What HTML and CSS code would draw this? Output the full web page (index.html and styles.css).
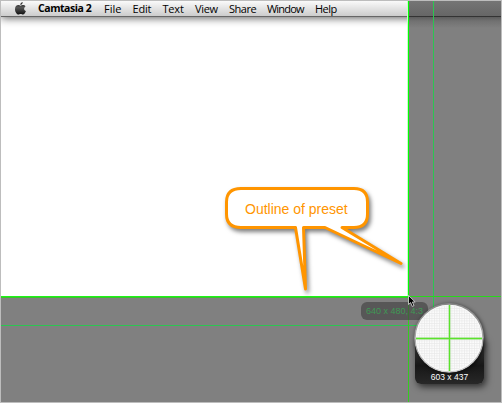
FILE: index.html
```
<!DOCTYPE html>
<html lang="en">
<head>
<meta charset="utf-8">
<title>Camtasia 2</title>
<link rel="stylesheet" href="styles.css">
</head>
<body>
<main class="screen">
  <nav class="menubar">
    <svg class="apple" width="11" height="13" viewBox="0 0 11 13"><defs><linearGradient id="ag" x1="0" y1="0" x2="0" y2="1"><stop offset="0" stop-color="#222"/><stop offset=".45" stop-color="#555"/><stop offset="1" stop-color="#111"/></linearGradient></defs><path fill="url(#ag)" d="M7.7 0C7.7 1.7 6.7 2.9 5.3 3 5.2 1.5 6.3.4 7.7 0ZM5.5 3.7C6.2 3.7 6.8 3.1 8 3.1c1.1 0 2 .5 2.500 1.300C8.500 5.700 8.800 8.200 11 9.100 10.200 11 9.200 12.500 8 12.500c-.9 0-1.300-.5-2.300-.5-1.100 0-1.500.5-2.300.5C1.700 12.500 0 9.700 0 7.200 0 4.500 1.600 3.100 3.300 3.100c1 0 1.600.6 2.200.6Z"/></svg>
    <b class="camtasia">Camtasia 2</b>
    <span class="file">File</span>
    <span class="edit">Edit</span>
    <span class="text">Text</span>
    <span class="view">View</span>
    <span class="share">Share</span>
    <span class="window">Window</span>
    <span class="help">Help</span>
  </nav>
  <div class="dim-right"></div>
  <div class="dim-bottom"></div>
  <div class="selection"></div>
  <div class="preset-v"></div>
  <div class="preset-v-top"></div>
  <div class="preset-h"></div>
  <div class="preset-h-left"></div>
  <div class="size-tag">640 x 480, 4:3</div>
  <div class="loupe">
    <svg class="lens" width="70" height="70" viewBox="0 0 70 70">
      <defs>
        <pattern id="grid" width="2.500" height="2.500" patternUnits="userSpaceOnUse"><path d="M0 .4H2.500M.4 0V2.500" stroke="#e9e9e9" stroke-width=".7"/></pattern>
        <linearGradient id="rim" x1="0" y1="0" x2="0" y2="1"><stop offset="0" stop-color="#888"/><stop offset="1" stop-color="#ccc"/></linearGradient>
      </defs>
      <circle cx="35" cy="35" r="34" fill="#fbfbfb" stroke="url(#rim)" stroke-width="1.300"/>
      <circle cx="35" cy="35" r="32.500" fill="url(#grid)"/>
      <path d="M35.500 2V68M2 35.500H68" stroke="#b5d6aa" stroke-width="2.400" opacity=".6"/>
      <path d="M35.500 2V68M2 35.500H68" stroke="#5be32c" stroke-width="1.300"/>
    </svg>
    <div class="coords">603 x 437</div>
  </div>
  <svg class="cursor" width="9" height="13" viewBox="0 0 9 13"><path d="M.5.5V9.500L2.600 7.600 4.200 11.400 6 10.600 4.400 7H7.200Z" fill="#000" stroke="#ddd" stroke-width=".8"/></svg>
  <svg class="callout" width="190" height="120" viewBox="220 180 190 120">
    <path d="M241 188.500H354Q367.500 188.500 367.500 202V214Q367.500 227.500 354 227.500H342L401 263.500 325 227.500H303.500L305.500 289 295.500 227.500H241Q226.500 227.500 226.500 214V202Q226.500 188.500 241 188.500Z" fill="#fff" stroke="#ff9500" stroke-width="3" stroke-linejoin="round"/>
  </svg>
  <div class="callout-label">Outline of preset</div>
</main>
</body>
</html>
```
FILE: styles.css
```
* { box-sizing: border-box; }
body { margin: 0; }
.screen {
  position: relative;
  width: 502px;
  height: 403px;
  overflow: hidden;
  background: #fff;
  border: 1px solid #bdbdbd;
  font-family: "Liberation Sans", Arial, sans-serif;
}
.menubar {
  display: flex;
  align-items: center;
  height: 16px;
  padding-left: 14px;
  border-bottom: 1px solid #666;
  background: linear-gradient(#fafafa, #ccc);
  box-shadow: 0 1px 8px rgba(0, 0, 0, .65);
  font: 500 11px/15px "Open Sans", "Noto Sans", sans-serif;
  color: #000;
  white-space: nowrap;
}
.menubar span, .menubar b { flex: none; }
.apple { flex: none; width: 11px; margin-right: 12px; }
.menubar .camtasia { width: 66px; font-size: 10.5px; letter-spacing: -.45px; }
.file { width: 28.500px; }
.edit { width: 30px; letter-spacing: -.2px; }
.text { width: 32.500px; letter-spacing: -.2px; }
.view { width: 34px; letter-spacing: -.3px; }
.share { width: 38px; letter-spacing: -.5px; }
.window { width: 48px; letter-spacing: -.8px; }
.help { letter-spacing: -.5px; }
.dim-right, .dim-bottom, .selection, .preset-v-top, .preset-v, .preset-h, .preset-h-left,
.size-tag, .loupe, .cursor, .callout, .callout-label { position: absolute; }
.dim-right { left: 408px; right: 0; top: 0; bottom: 0; background: linear-gradient(#757575 0, #666 15px, #333 15px, #333 16px, #5c5c5c 16px, #717171 20px, #808080 27px); }
.dim-bottom { left: 0; right: 0; top: 296px; bottom: 0; background: #808080; }
.selection { left: 0; top: 0; width: 433px; height: 325px; border: solid #2bc651; border-width: 0 1px 1px 0; }
.preset-v { left: 407px; top: 0; width: 1px; bottom: 0; background: #35cc1f; }
.preset-v-top { left: 406px; top: 0; width: 2px; height: 296px; background: linear-gradient(90deg, #c8ffc8 50%, #0f0 50%); }
.preset-h { left: 408px; right: 0; top: 295px; height: 1px; background: #28d71c; }
.preset-h-left { left: 0; width: 408px; top: 295px; height: 2px; background: linear-gradient(#1cf316 50%, #37c528 50%); }
.size-tag {
  left: 360px;
  top: 301px;
  width: 67px;
  height: 18px;
  padding-left: 5px;
  border-radius: 6px;
  background: rgba(65, 65, 65, .65);
  color: #3f9955;
  font-size: 9px;
  line-height: 19px;
  white-space: nowrap;
}
.loupe {
  left: 414px;
  top: 302px;
  width: 69px;
  height: 81px;
}
.loupe::before {
  content: "";
  position: absolute;
  inset: 35px 0 0;
  border-radius: 0 0 6px 6px;
  background: linear-gradient(#444, #171717 60%, #282828);
  box-shadow: 2px 3px 7px rgba(0, 0, 0, .65);
}
.lens { position: relative; display: block; border-radius: 50%; margin-left: -1px; box-shadow: 1px 1px 4px rgba(0, 0, 0, .6); }
.coords { position: relative; margin-top: -1px; text-align: center; font-size: 8.5px; line-height: 11px; color: #fff; white-space: nowrap; }
.cursor { left: 407px; top: 294px; }
.callout { left: 219px; top: 179px; filter: drop-shadow(2px 3px 2px rgba(0, 0, 0, .5)); z-index: 2; }
.callout-label { left: 244px; top: 199px; z-index: 3; font-size: 14px; line-height: 18px; color: #ff9500; white-space: nowrap; }
```
